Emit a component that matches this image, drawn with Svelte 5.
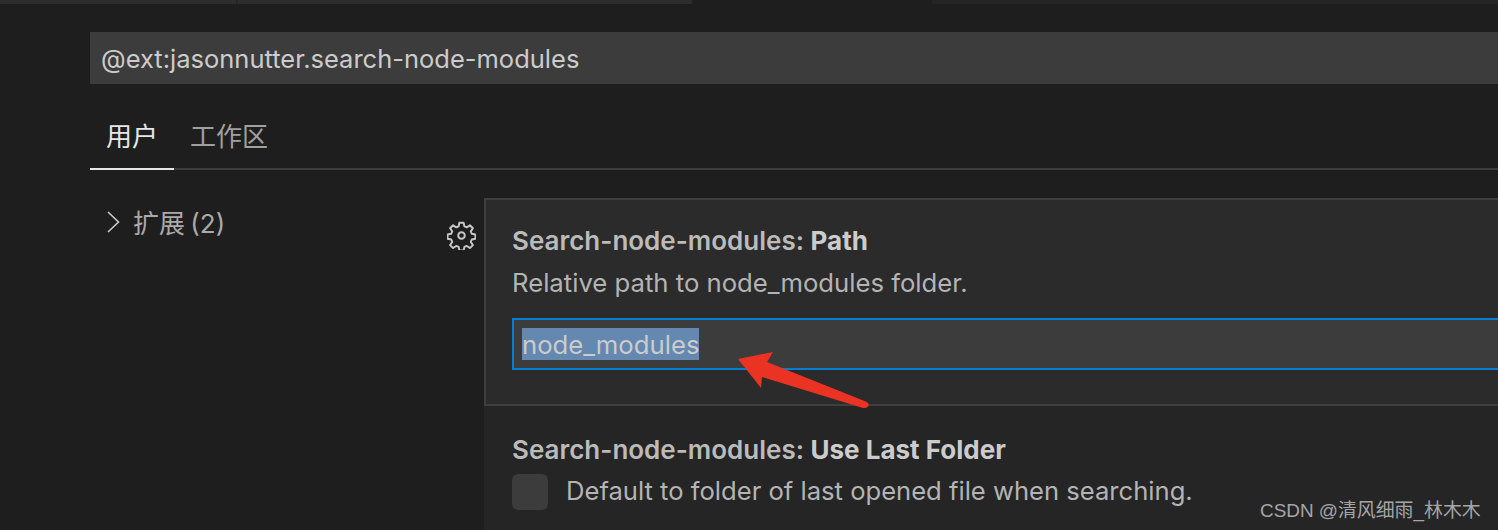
<script>
	const tabs = [
		{ label: '用户', active: true },
		{ label: '工作区', active: false }
	];
</script>

<div class="root">
	<div class="top-strip">
		<span class="strip-a"></span>
		<span class="strip-b"></span>
		<span class="strip-gap"></span>
		<span class="strip-c"></span>
	</div>
	<div class="content">
		<div class="search">@ext:jasonnutter.search-node-modules</div>
		<div class="tabs">
			{#each tabs as t}
				<div class="tab" class:active={t.active}>{t.label}</div>
			{/each}
		</div>
		<div class="body">
			<div class="tree">
				<svg class="chevron" width="16" height="24" viewBox="0 0 16 24">
					<path d="M3 2 L13.5 12 L3 22" fill="none" stroke="#cccccc" stroke-width="1.6" />
				</svg>
				<span class="tree-label">扩展 (2)</span>
			</div>
			<div class="gear-col">
				<svg width="29" height="29" viewBox="0 0 30 30">
					<path
						fill="none"
						stroke="#c8c8c8"
						stroke-width="2"
						stroke-linejoin="round"
						d="M12.8 1.8h4.4l.8 3.8 2.5 1 3.2-2.2 3.1 3.1-2.2 3.2 1 2.5 3.8.8v4.4l-3.8.8-1 2.5 2.2 3.2-3.1 3.1-3.2-2.2-2.5 1-.8 3.8h-4.4l-.8-3.8-2.5-1-3.2 2.2-3.1-3.1 2.2-3.2-1-2.5-3.8-.8v-4.4l3.8-.8 1-2.5-2.2-3.2 3.1-3.1 3.2 2.2 2.5-1z"
					/>
					<circle cx="15" cy="15" r="3.4" fill="none" stroke="#c8c8c8" stroke-width="2" />
				</svg>
			</div>
			<div class="settings">
				<div class="setting focused">
					<div class="title">Search-node-modules: <b>Path</b></div>
					<div class="desc">Relative path to node_modules folder.</div>
					<div class="input"><span class="selected">node_modules</span></div>
				</div>
				<div class="setting plain">
					<div class="title">Search-node-modules: <b>Use Last Folder</b></div>
					<div class="check-row">
						<span class="checkbox"></span>
						<span class="desc">Default to folder of last opened file when searching.</span>
					</div>
				</div>
			</div>
		</div>
	</div>

	<svg class="arrow" width="140" height="70" viewBox="0 0 140 70">
		<path
			d="M2 14 L37 7 L31 17 L131 57 Q134 60 132 61.5 Q130 63.5 127 63 L26 32 L25 43 Z"
			fill="#ea3323"
		/>
	</svg>
	<div class="watermark">CSDN @清风细雨_林木木</div>
</div>

<style>
	:global(body) {
		margin: 0;
		background: #1e1e1e;
		overflow: hidden;
	}
	.root {
		position: relative;
		width: 1498px;
		height: 530px;
		overflow: hidden;
		background: #1e1e1e;
		color: #cccccc;
		font-family: Inter, 'Noto Sans CJK SC', sans-serif;
	}
	.top-strip {
		display: flex;
		height: 4px;
	}
	.strip-a {
		width: 236px;
		background: #2d2d2d;
		border-right: 2px solid #252526;
	}
	.strip-b {
		width: 453px;
		background: #2d2d2d;
		border-right: 2px solid #252526;
	}
	.strip-gap {
		width: 239px;
		background: #1e1e1e;
	}
	.strip-c {
		flex: 1;
		background: #252526;
	}
	.content {
		padding: 28px 0 0 90px;
	}
	.search {
		height: 52px;
		line-height: 54px;
		padding-left: 11px;
		background: #3c3c3c;
		font-size: 25.5px;
		color: #cccccc;
		white-space: nowrap;
	}
	.tabs {
		display: flex;
		height: 86px;
		box-sizing: border-box;
		border-bottom: 2px solid #3c3c3c;
		margin-bottom: 28px;
	}
	.tab {
		height: 86px;
		box-sizing: border-box;
		padding: 36px 16px 0;
		font-size: 26px;
		line-height: 34px;
		color: #a0a0a0;
	}
	.tab.active {
		color: #e7e7e7;
		border-bottom: 2px solid #e7e7e7;
	}
	.body {
		display: flex;
		align-items: flex-start;
	}
	.tree {
		display: flex;
		align-items: center;
		width: 357px;
		height: 48px;
		box-sizing: border-box;
		padding-left: 15px;
		flex-shrink: 0;
	}
	.chevron {
		flex-shrink: 0;
	}
	.tree-label {
		margin: 0 0 2px 12px;
		font-size: 26px;
		word-spacing: -2px;
		color: #aaaaaa;
	}
	.gear-col {
		width: 37px;
		padding: 23px 0 0 0;
		flex-shrink: 0;
		line-height: 0;
	}
	.settings {
		flex: 1;
		min-width: 0;
		background: #252526;
		min-height: 332px;
	}
	.setting {
		padding: 0 0 0 28px;
	}
	.focused {
		height: 208px;
		box-sizing: border-box;
		padding-top: 24px;
		background: #2b2b2c;
		border: 2px solid #3f3f40;
		border-right: none;
		padding-left: 26px;
	}
	.plain {
		padding-top: 27px;
	}
	.title {
		font-size: 26px;
		line-height: 34px;
		font-weight: 600;
		color: #bbbbbb;
		white-space: nowrap;
	}
	.title b {
		font-weight: 700;
		color: #cccccc;
	}
	.desc {
		font-size: 25.7px;
		line-height: 34px;
		color: #b4b4b4;
		white-space: nowrap;
	}
	.focused .desc {
		margin-top: 8px;
	}
	.input {
		display: flex;
		align-items: center;
		margin-top: 18px;
		height: 52px;
		box-sizing: border-box;
		padding-left: 8px;
		background: #3c3c3c;
		border: 2px solid #007fd4;
		border-right: none;
		font-size: 25.7px;
	}
	.selected {
		height: 32px;
		line-height: 34px;
		background: #6588b0;
		color: #cccccc;
	}
	.check-row {
		display: flex;
		align-items: center;
		gap: 18px;
		margin-top: 7px;
	}
	.check-row .desc {
		position: relative;
		top: -1px;
		font-size: 25.6px;
	}
	.checkbox {
		width: 36px;
		height: 36px;
		border-radius: 6px;
		background: #3c3c3c;
		flex-shrink: 0;
	}
	.arrow {
		position: absolute;
		left: 736px;
		top: 345px;
	}
	.watermark {
		position: absolute;
		left: 1260px;
		top: 498px;
		font-family: 'Liberation Sans', 'Noto Sans CJK SC', sans-serif;
		font-size: 18.9px;
		line-height: 26px;
		color: #a6a6a6;
		white-space: nowrap;
	}
</style>
